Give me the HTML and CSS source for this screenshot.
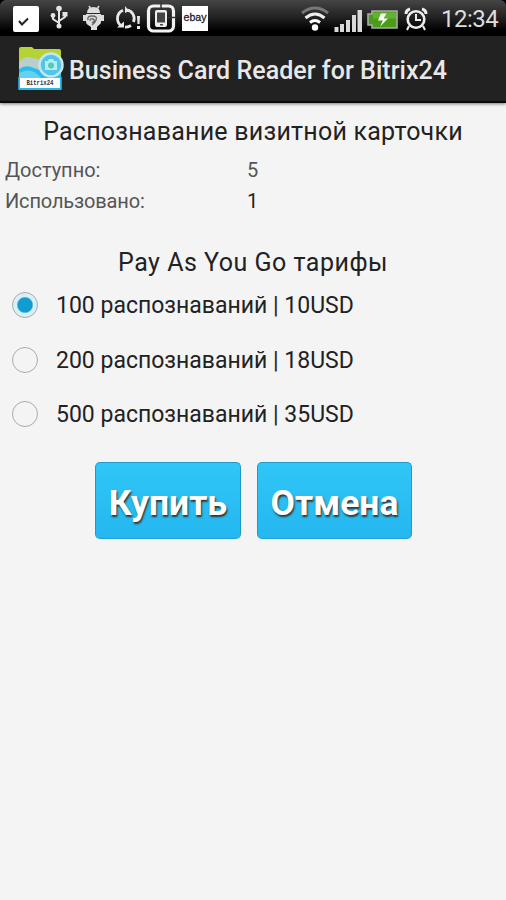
FILE: index.html
```
<!DOCTYPE html>
<html lang="ru">
<head>
<meta charset="utf-8">
<title>Business Card Reader for Bitrix24</title>
<link rel="stylesheet" href="styles.css">
</head>
<body>
<header class="status">
  <svg class="status-icons" width="506" height="36" viewBox="0 0 506 36">
    <path d="M0 0h5Q1 1 0 5zM506 0h-5q4 1 5 5z" fill="#000"/>
    <rect x="13" y="6" width="26" height="26" rx="2" fill="#fff"/>
    <path d="M19 21l3 3.500 6-6" fill="none" stroke="#222" stroke-width="2"/>
    <path d="M59 9v17M59 23l-6-4v-3M59 21l6-4v-3" fill="none" stroke="#e4e4e4" stroke-width="2"/>
    <g fill="#e4e4e4"><circle cx="59" cy="8.500" r="2.800"/><circle cx="59" cy="26" r="2.500"/><circle cx="53" cy="15.500" r="2.400"/><rect x="62.500" y="12" width="5" height="4.500"/></g>
    <path d="M89 6l2 3M99 6l-2 3" stroke="#ddd" stroke-width="1.500" fill="none"/>
    <path d="M87 13q0-6 6.500-6t6.500 6zM86 14h15v8q0 2-2 3l-2 2v3h-6v-3l-3-2q-2-1-2-3zM83 15h4v6h-4zM100 15h4v6h-4z" fill="#ddd"/>
    <path d="M88 20q-1-4 4-4 6 0 4 4-1 3-4 5m-2-4q0-3 3-2t-1 4" fill="none" stroke="#666" stroke-width="1.400"/>
    <g fill="none" stroke="#e8e8e8" stroke-width="2.800"><path d="M121.500 26A9 9 0 0 1 123 10.200M127 9.800A9 9 0 0 1 133.500 22M131 25.500A9 9 0 0 1 125 27"/></g>
    <path d="M117 27.500h7v-6zM125 6v7l4-2zM137 16h3l-.5 8h-2zM137 26h3v3h-3z" fill="#e8e8e8"/>
    <rect x="148.500" y="6" width="25" height="25" rx="5" fill="none" stroke="#f2f2f2" stroke-width="3.200"/>
    <rect x="155" y="10" width="12" height="17" rx="2" fill="#eee"/><path d="M157 12.500h8v10h-8zM160 24h3v1.500h-3z" fill="#444"/>
    <path d="M168 17.500h8M161 3v5" stroke="#333" stroke-width="1.500"/>
    <rect x="182" y="6" width="26" height="25" fill="#fff"/>
    <text class="ebay" x="195" y="21" text-anchor="middle" textLength="23" lengthAdjust="spacingAndGlyphs">ebay</text>
    <g fill="none" stroke-width="3"><path d="M302 13q13-10 26 0" stroke="#777"/><path d="M305.500 18q9.500-8 19 0" stroke="#eee"/><path d="M310 22.500q5-4 10 0" stroke="#fff"/></g>
    <circle cx="315" cy="27.500" r="3.200" fill="#fff"/>
    <path d="M334.500 27h4v5h-4zM340 24h4v8h-4zM346 20h4v12h-4zM352 15h4v17h-4zM357.500 10h4.500v22h-4.500z" fill="#d8d8d8"/>
    <path d="M372 11h25v17h-25v-3h-4v-11h4z" fill="#4a9c19" stroke="#aaa" stroke-width="1.600"/>
    <path d="M373 12.500h23v6h-23z" fill="#62b430"/>
    <path d="M381 13.500l-3 7h5l-3 6 8-8h-4.500l3-5z" fill="#fff"/>
    <g fill="none" stroke="#eee"><circle cx="416" cy="19.500" r="8.300" stroke-width="2.600"/><path d="M416 14v6h5M409 26l-2 4M423 26l2 4" stroke-width="2"/><path d="M406 14q0-4 4-5M426 14q0-4-4-5" stroke-width="3"/></g>
  </svg>
  <span class="clock">12:34</span>
</header>
<div class="appbar">
  <svg class="logo" width="46" height="48" viewBox="0 0 46 48">
    <path d="M1 4q0-2 2-2h11l2 2h25q2 0 2 2v38q0 1-1 1H1z" fill="#b5d334"/>
    <path d="M1 17q6-7 14-4 7 1 9 4h19v28H1z" fill="#b9cfcd"/>
    <path d="M1 24q7-5 15-1 9 5 27-2v24H1z" fill="#28bdea"/>
    <path d="M1 28q13-7 22 5L1 36z" fill="#65d0ef"/>
    <rect x="2" y="33" width="40" height="10" fill="#fff"/><path d="M1 32v12h42V32" fill="none" stroke="#26b9e6" stroke-width="1.500"/>
    <circle cx="33" cy="20" r="11.500" fill="#4fc6ea" stroke="#c7e5ee" stroke-width="2.500"/>
    <path d="M27 16h3l1-2h4l1 2h3v9H27z" fill="#b9eafa"/><circle cx="33" cy="20.500" r="3" fill="#55cba9"/>
    <text class="logo-text" x="22" y="40" text-anchor="middle" textLength="27" lengthAdjust="spacingAndGlyphs">Bitrix24</text>
  </svg>
  <h1 class="title">Business Card Reader for Bitrix24</h1>
</div>
<main class="content">
  <h2 class="heading heading-main">Распознавание визитной карточки</h2>
  <dl class="stats">
    <dt class="available">Доступно:</dt><dd>5</dd>
    <dt class="used">Использовано:</dt><dd class="dark">1</dd>
  </dl>
  <h2 class="heading heading-plans">Pay As You Go тарифы</h2>
  <div class="plans">
    <label class="plan"><i class="radio radio-on"></i><span>100 распознаваний | 10USD</span></label>
    <label class="plan"><i class="radio"></i><span>200 распознаваний | 18USD</span></label>
    <label class="plan"><i class="radio"></i><span>500 распознаваний | 35USD</span></label>
  </div>
  <div class="actions">
    <button class="btn buy">Купить</button>
    <button class="btn cancel">Отмена</button>
  </div>
</main>
</body>
</html>
```
FILE: styles.css
```
* { box-sizing: border-box; }
body { margin: 0; min-height: 900px; background: #f4f4f4; color: #222; font-family: Roboto, sans-serif; }
h1, h2, dl, dd { margin: 0; font-weight: 400; }
.status { position: relative; height: 36px; background: linear-gradient(#454545, #202020 50%, #000 85%); }
.status-icons { display: block; }
.ebay { font: 400 11px "Liberation Sans", sans-serif; fill: #222; stroke: #222; stroke-width: .3px; }
.clock { position: absolute; left: 441px; top: 4px; line-height: 30px; font-size: 24px; letter-spacing: -.5px; color: #ddd; white-space: nowrap; }
.appbar { display: flex; align-items: center; height: 67px; padding: 0 0 0 18px; background: #222; border-bottom: 2px solid #0b0b0b; box-shadow: 0 1px 3px #777; }
.logo { flex: none; margin-top: 1px; }
.logo-text { font: 700 6.500px "Liberation Mono", monospace; fill: #333; }
.title { margin: 5px 0 0 5px; font-size: 25px; font-weight: 500; letter-spacing: .04px; line-height: 30px; white-space: nowrap; color: #e8e8e8; }
.heading { font-size: 25px; line-height: 30px; text-align: center; white-space: nowrap; }
.heading-main { padding-top: 14px; letter-spacing: .23px; }
.heading-plans { margin-top: 31px; letter-spacing: .5px; }
.stats { display: grid; grid-template-columns: 242px 1fr; grid-auto-rows: 31px; margin-top: 8px; padding-left: 5px; font-size: 20px; line-height: 31px; color: #555; }
.used { letter-spacing: -.15px; }
.dark { color: #222; }
.plans { margin-top: 0; }
.plan { display: flex; align-items: center; height: 54.500px; padding-left: 12px; font-size: 23px; line-height: 30px; white-space: nowrap; }
.plan span { padding-top: 2px; }
.radio { flex: none; width: 26px; height: 26px; margin-right: 18px; border: 1.500px solid #aaa; border-radius: 50%; }
.radio-on { background: radial-gradient(circle, #129cd0 7px, #d9f0f8 8.500px); }
.actions { display: flex; gap: 16px; margin-top: 20.500px; padding-left: 95px; }
.btn { height: 77px; padding: 4px 0 0; border: 1.500px solid #2399c6; border-bottom-color: #239fd6; border-radius: 5px; background: linear-gradient(#30c6f6, #25b7f0); color: #fff; font: 700 35.500px Roboto, sans-serif; text-shadow: 1px 2px 2px #333; }
.buy { width: 146px; }
.cancel { width: 155px; }
```
